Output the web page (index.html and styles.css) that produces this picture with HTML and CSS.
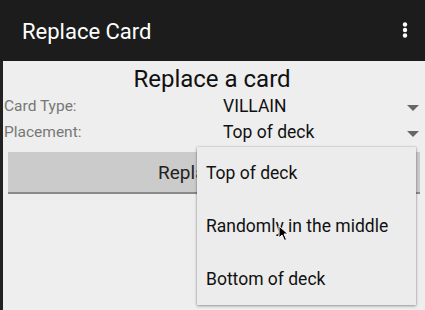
FILE: index.html
```html
<!DOCTYPE html>
<html>
<head>
<meta charset="utf-8">
<link rel="stylesheet" href="styles.css">
</head>
<body>
<header class="appbar">
  <span class="appbar-title">Replace Card</span>
  <svg class="overflow" width="6" height="16" viewBox="0 0 6 16"><circle cx="3" cy="2.5" r="2.2" fill="#fff"/><circle cx="3" cy="8" r="2.2" fill="#fff"/><circle cx="3" cy="13.5" r="2.2" fill="#fff"/></svg>
</header>
<main class="content">
  <h1 class="heading">Replace a card</h1>
  <div class="row">
    <span class="label">Card Type:</span>
    <span class="value">VILLAIN</span>
    <span class="caret"></span>
  </div>
  <div class="row">
    <span class="label">Placement:</span>
    <span class="value">Top of deck</span>
    <span class="caret"></span>
  </div>
  <div class="button">Replace Card</div>
  <ul class="menu">
    <li class="menu-item">Top of deck</li>
    <li class="menu-item">Randomly in the middle</li>
    <li class="menu-item">Bottom of deck</li>
  </ul>
  <svg class="cursor" width="12" height="17" viewBox="0 0 12 17"><path d="M1 1 L1 13 L4 10 L6.5 15.5 L8.5 14.5 L6 9 L10 9 Z" fill="#000" stroke="#fff" stroke-width="1"/></svg>
</main>
</body>
</html>
```
FILE: styles.css
```css
* { box-sizing: border-box; }
html, body { margin: 0; padding: 0; }
body {
  width: 425px;
  height: 310px;
  overflow: hidden;
  background: #eeeeee;
  font-family: Roboto, "Noto Sans", sans-serif;
}
.appbar {
  height: 61px;
  background: #1c1c1c;
  display: flex;
  align-items: center;
  justify-content: space-between;
  padding: 0 17px 0 22px;
}
.appbar-title {
  color: #ffffff;
  font-size: 22px;
  margin-top: 2px;
}
.overflow { margin-top: -2px; }
.content {
  position: relative;
  height: 249px;
  border-left: 3px solid #222;
  padding: 4px 5px 0 1px;
}
.heading {
  margin: 0;
  font-size: 24px;
  font-weight: 400;
  color: #111;
  text-align: center;
  line-height: 28px;
}
.row {
  display: flex;
  align-items: baseline;
  height: 26px;
  line-height: 26px;
}
.label {
  width: 219px;
  font-size: 15.5px;
  color: #777;
  position: relative;
  top: -1px;
}
.value {
  flex: 1;
  font-size: 17.5px;
  color: #111;
}
.caret {
  align-self: center;
  width: 0;
  height: 0;
  border-left: 6px solid transparent;
  border-right: 6px solid transparent;
  border-top: 6px solid #666;
  margin: 3px 1px 0 0;
}
.button {
  margin: 7px 0 0 4px;
  height: 42px;
  background: #cbcbcb;
  border-bottom: 2px solid #8a8a8a;
  display: flex;
  align-items: center;
  justify-content: center;
  font-size: 19px;
  color: #222;
}
.menu {
  position: absolute;
  left: 194px;
  top: 86px;
  width: 219px;
  height: 158px;
  margin: 0;
  padding: 0;
  list-style: none;
  background: #ececec;
  box-shadow: 0 1px 3px rgba(0,0,0,0.35), 0 0 1px rgba(0,0,0,0.3);
  display: flex;
  flex-direction: column;
}
.menu-item {
  flex: 1;
  display: flex;
  align-items: center;
  padding-left: 9px;
  font-size: 17.5px;
  color: #111;
}
.cursor {
  position: absolute;
  left: 275px;
  top: 164px;
}
```
